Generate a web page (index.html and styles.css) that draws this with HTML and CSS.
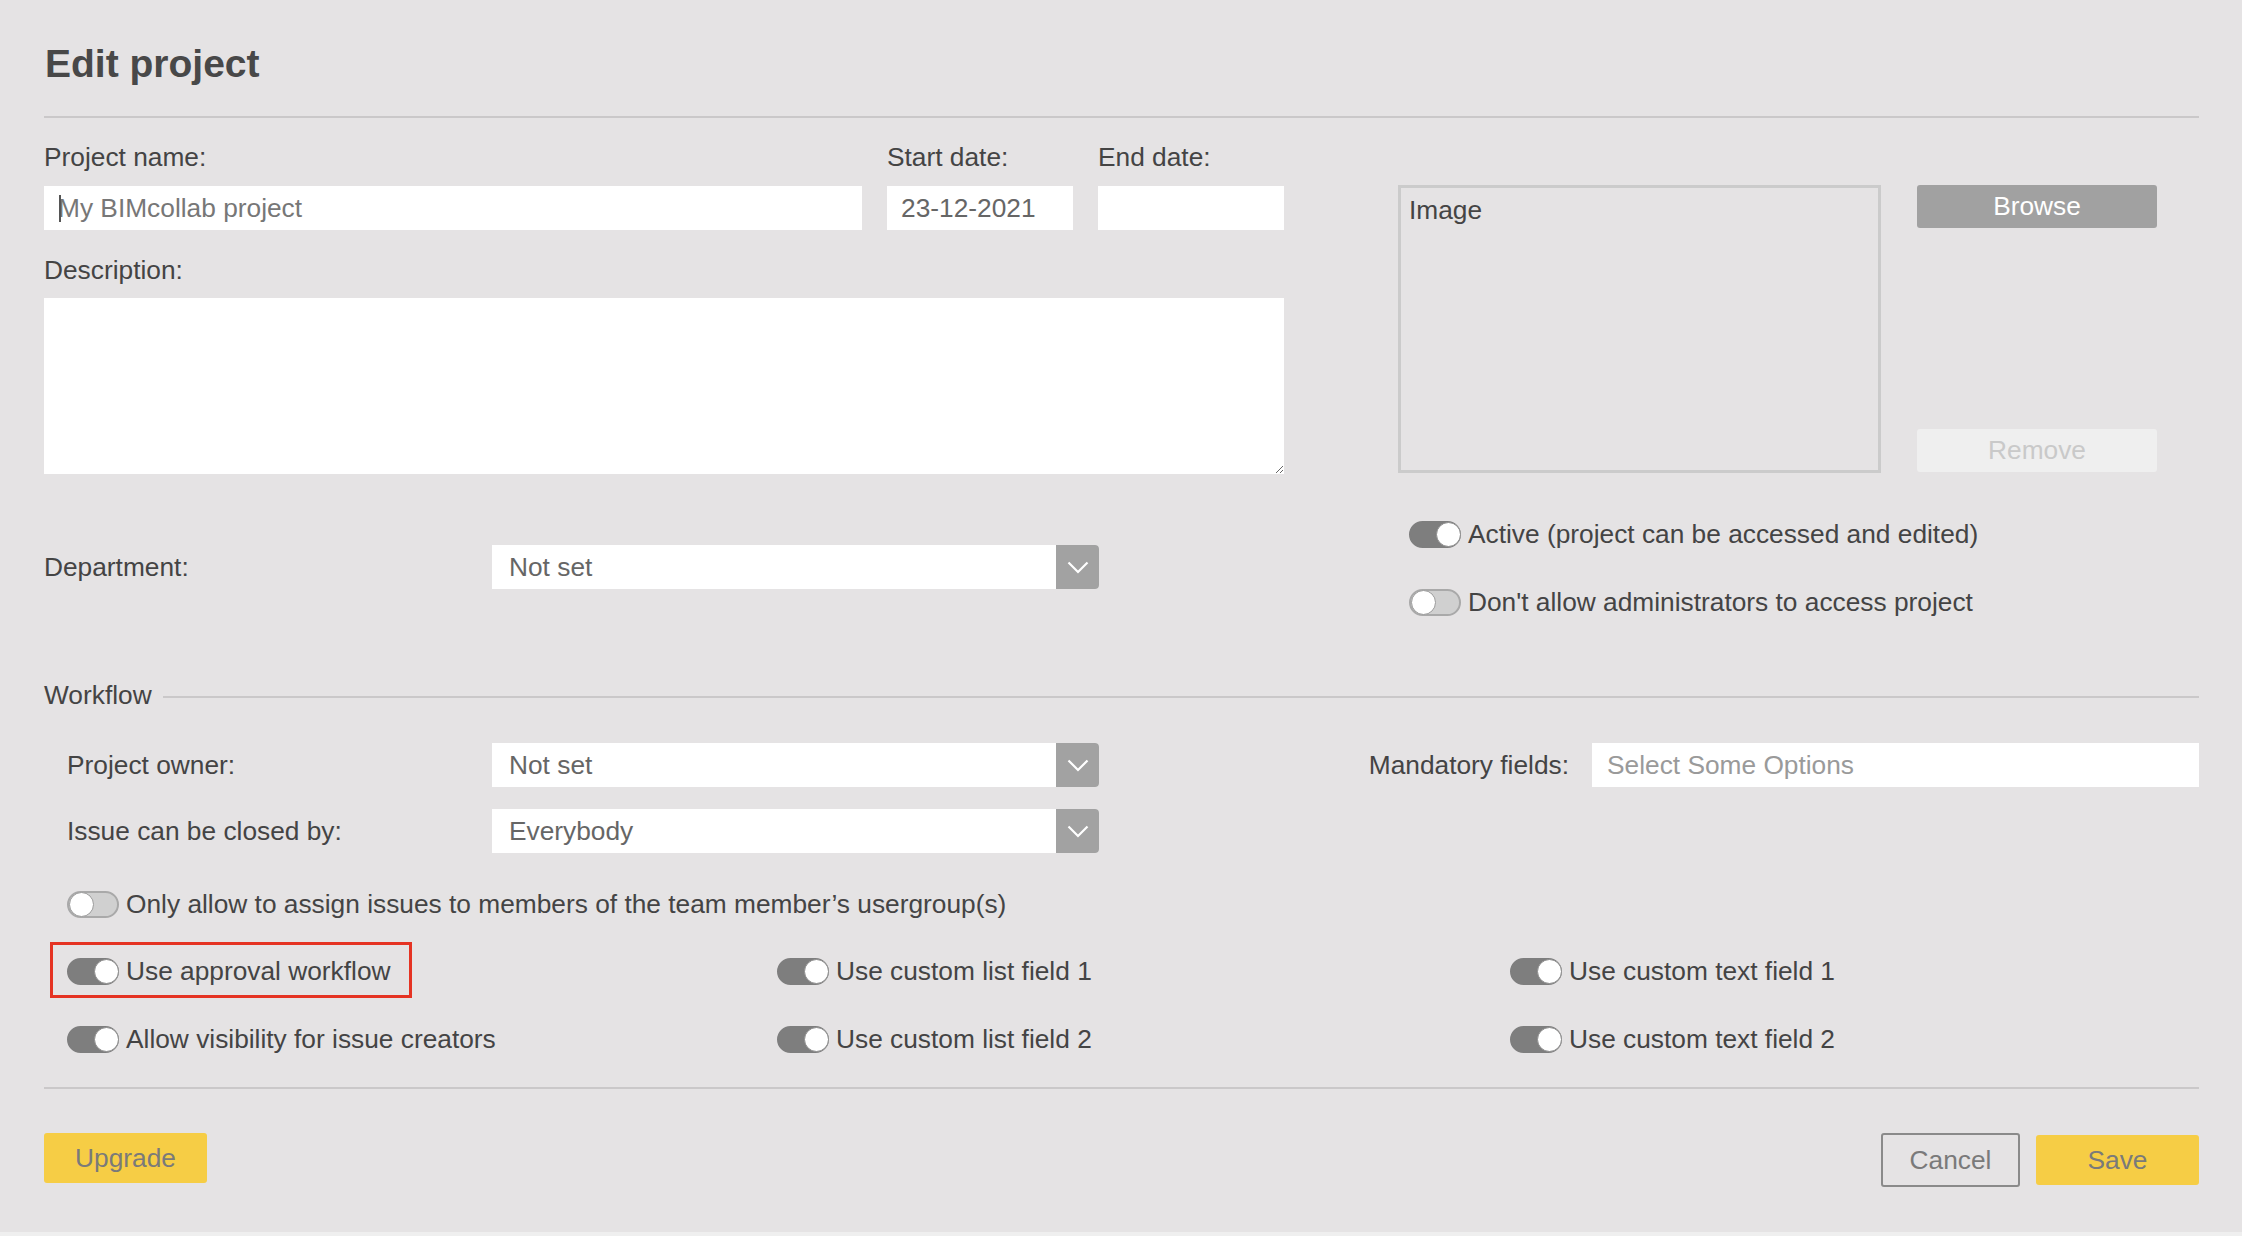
FILE: index.html
```html
<!DOCTYPE html>
<html lang="en">
<head>
    <meta charset="UTF-8">
    <title>Edit project</title>
    <link rel="stylesheet" href="styles.css">
</head>
<body>

    <div class="dialog">
        <h1 class="title">Edit project</h1>

        <div class="top">
            <div class="left-col">
                <div class="name-row">
                    <div class="field name-field">
                        <label>Project name:</label>
                        <div class="input-wrap">
                            <input type="text" class="text-input muted" value="My BIMcollab project">
                            <span class="caret"></span>
                        </div>
                    </div>
                    <div class="field date-field">
                        <label>Start date:</label>
                        <input type="text" class="text-input" value="23-12-2021">
                    </div>
                    <div class="field date-field">
                        <label>End date:</label>
                        <input type="text" class="text-input" value="">
                    </div>
                </div>

                <label class="desc-label">Description:</label>
                <textarea class="description"></textarea>

                <div class="select-row department">
                    <span class="row-label">Department:</span>
                    <div class="select">
                        <span class="select-value">Not set</span>
                        <span class="select-arrow">
                            <svg width="22" height="13" viewBox="0 0 22 13"><polyline points="1.5,1.5 11,11 20.5,1.5" fill="none" stroke="#fff" stroke-width="2.2"/></svg>
                        </span>
                    </div>
                </div>
            </div>

            <div class="right-col">
                <div class="image-row">
                    <div class="image-box">Image</div>
                    <div class="image-buttons">
                        <button class="btn-browse">Browse</button>
                        <button class="btn-remove">Remove</button>
                    </div>
                </div>
                <div class="switch-list">
                    <div class="switch-item"><span class="switch on"></span>Active (project can be accessed and edited)</div>
                    <div class="switch-item"><span class="switch"></span>Don't allow administrators to access project</div>
                </div>
            </div>
        </div>

        <div class="legend">
            <span>Workflow</span>
            <span class="legend-line"></span>
        </div>

        <div class="workflow">
            <div class="select-row">
                <span class="row-label">Project owner:</span>
                <div class="select">
                    <span class="select-value">Not set</span>
                    <span class="select-arrow">
                        <svg width="22" height="13" viewBox="0 0 22 13"><polyline points="1.5,1.5 11,11 20.5,1.5" fill="none" stroke="#fff" stroke-width="2.2"/></svg>
                    </span>
                </div>
                <div class="mandatory">
                    <span class="mandatory-label">Mandatory fields:</span>
                    <div class="multi-select">Select Some Options</div>
                </div>
            </div>
            <div class="select-row second">
                <span class="row-label">Issue can be closed by:</span>
                <div class="select">
                    <span class="select-value">Everybody</span>
                    <span class="select-arrow">
                        <svg width="22" height="13" viewBox="0 0 22 13"><polyline points="1.5,1.5 11,11 20.5,1.5" fill="none" stroke="#fff" stroke-width="2.2"/></svg>
                    </span>
                </div>
            </div>

            <div class="switch-item single"><span class="switch"></span>Only allow to assign issues to members of the team member’s usergroup(s)</div>

            <div class="switch-grid">
                <div class="switch-item marked"><span class="switch on"></span>Use approval workflow</div>
                <div class="switch-item"><span class="switch on"></span>Use custom list field 1</div>
                <div class="switch-item"><span class="switch on"></span>Use custom text field 1</div>
                <div class="switch-item"><span class="switch on"></span>Allow visibility for issue creators</div>
                <div class="switch-item"><span class="switch on"></span>Use custom list field 2</div>
                <div class="switch-item"><span class="switch on"></span>Use custom text field 2</div>
            </div>
        </div>

        <div class="footer">
            <button class="btn-yellow btn-upgrade">Upgrade</button>
            <div class="footer-right">
                <button class="btn-cancel">Cancel</button>
                <button class="btn-yellow btn-save">Save</button>
            </div>
        </div>
    </div>

</body>
</html>
```

FILE: styles.css
```css
html {
    background-color: #efefef;
}
body {
    margin: 0;
    font-family: "Liberation Sans", Arial, sans-serif;
    font-size: 26.3px;
    color: #444;
}
.dialog {
    background-color: #e5e3e4;
    height: 1232px;
    padding: 0 43px 0 44px;
    box-sizing: border-box;
}
.title {
    margin: 0;
    padding: 41px 0 29px 1px;
    font-size: 39px;
    line-height: 46px;
    font-weight: bold;
    color: #484848;
    border-bottom: 2px solid #cac8c9;
}

/* top part */
.top {
    display: flex;
    align-items: flex-start;
}
.left-col {
    width: 1240px;
}
.name-row {
    display: flex;
    gap: 25px;
    margin-top: 24px;
}
.field label,
.desc-label {
    display: block;
    line-height: 30px;
}
.name-field {
    width: 818px;
}
.date-field {
    width: 186px;
}
.field .text-input,
.input-wrap {
    margin-top: 14px;
}
.input-wrap {
    position: relative;
}
.input-wrap .text-input {
    margin-top: 0;
}
.caret {
    position: absolute;
    left: 15px;
    top: 9px;
    width: 2px;
    height: 27px;
    background-color: #555;
}
.text-input {
    display: block;
    width: 100%;
    height: 44px;
    box-sizing: border-box;
    border: none;
    outline: none;
    padding: 0 14px;
    font-family: inherit;
    font-size: 26.3px;
    color: #666;
    background-color: #fff;
}
.text-input.muted {
    color: #777;
}
.desc-label {
    margin-top: 25px;
}
.description {
    display: block;
    width: 100%;
    height: 176px;
    margin-top: 13px;
    box-sizing: border-box;
    border: none;
    outline: none;
    background-color: #fff;
    font-family: inherit;
    font-size: 26px;
}

.select-row {
    display: flex;
    align-items: center;
}
.department {
    margin-top: 71px;
}
.row-label {
    width: 448px;
    line-height: 30px;
}
.workflow .row-label {
    width: 425px;
    padding-left: 23px;
}
.select {
    display: flex;
    width: 607px;
    height: 44px;
    background-color: #fff;
    border-radius: 0 4px 4px 0;
}
.select-value {
    flex: 1;
    padding-left: 17px;
    line-height: 44px;
    color: #666;
}
.select-arrow {
    width: 43px;
    display: flex;
    align-items: center;
    justify-content: center;
    background-color: #a2a2a2;
    border-radius: 0 4px 4px 0;
}

.right-col {
    margin-left: 114px;
    padding-top: 67px;
}
.image-row {
    display: flex;
    gap: 36px;
}
.image-box {
    width: 483px;
    height: 288px;
    box-sizing: border-box;
    border: 3px solid #cbcbcb;
    padding: 7px 8px;
    line-height: 30px;
}
.image-buttons {
    width: 240px;
    display: flex;
    flex-direction: column;
    justify-content: space-between;
    padding-bottom: 1px;
}
.image-buttons button {
    height: 43px;
    border: none;
    border-radius: 3px;
    font-family: inherit;
    font-size: 26.3px;
    padding: 0;
}
.btn-browse {
    background-color: #a1a1a1;
    color: #fff;
}
.btn-remove {
    background-color: #efefef;
    color: #c9c9c9;
}
.switch-list {
    margin-top: 46px;
    padding-left: 11px;
    display: flex;
    flex-direction: column;
    gap: 38px;
}

/* switches */
.switch-item {
    display: flex;
    align-items: center;
    line-height: 30px;
    white-space: nowrap;
}
.switch {
    position: relative;
    width: 52px;
    height: 27px;
    margin-right: 7px;
    box-sizing: border-box;
    border-radius: 14px;
    background-color: #d0d0d0;
    border: 2px solid #a9a9a9;
    flex-shrink: 0;
}
.switch::after {
    content: "";
    position: absolute;
    left: 0;
    top: -1px;
    width: 25px;
    height: 25px;
    box-sizing: border-box;
    border-radius: 50%;
    background-color: #fff;
    border: 1px solid #9a9a9a;
}
.switch.on {
    background-color: #7e7e7e;
    border-color: #7e7e7e;
}
.switch.on::after {
    left: auto;
    right: -2px;
    top: -1px;
    border-color: #8c8c8c;
}

/* workflow */
.legend {
    display: flex;
    align-items: center;
    margin-top: 63px;
    line-height: 30px;
}
.legend-line {
    flex: 1;
    height: 2px;
    margin-left: 11px;
    margin-top: 4px;
    background-color: #cac8c9;
}
.workflow .select-row {
    margin-top: 33px;
}
.workflow .select-row.second {
    margin-top: 22px;
}
.mandatory {
    margin-left: auto;
    display: flex;
    align-items: center;
}
.mandatory-label {
    margin-right: 23px;
}
.multi-select {
    width: 607px;
    height: 44px;
    box-sizing: border-box;
    padding-left: 15px;
    line-height: 44px;
    background-color: #fff;
    color: #9a9a9a;
}
.switch-item.single {
    margin-top: 36px;
    padding-left: 23px;
}
.switch-grid {
    display: grid;
    grid-template-columns: 710px 733px 1fr;
    row-gap: 38px;
    margin-top: 37px;
    padding-left: 23px;
}
.marked {
    position: relative;
    justify-self: start;
}
.marked::before {
    content: "";
    position: absolute;
    left: -17px;
    top: -14px;
    right: -21px;
    bottom: -12px;
    border: 3px solid #e53323;
}

/* footer */
.footer {
    display: flex;
    align-items: center;
    justify-content: space-between;
    margin-top: 33px;
    padding-top: 44px;
    border-top: 2px solid #cac8c9;
}
.footer-right {
    display: flex;
    align-items: center;
    gap: 16px;
}
.footer button {
    font-family: inherit;
    font-size: 26.3px;
    padding: 0;
    border-radius: 3px;
    color: #7a7a7a;
}
.btn-yellow {
    width: 163px;
    height: 50px;
    border: none;
    background-color: #f6cd45;
}
.btn-upgrade {
    margin-top: -4px;
}
.btn-cancel {
    width: 139px;
    height: 54px;
    border: 2px solid #8a8a8a;
    background-color: transparent;
}
```
